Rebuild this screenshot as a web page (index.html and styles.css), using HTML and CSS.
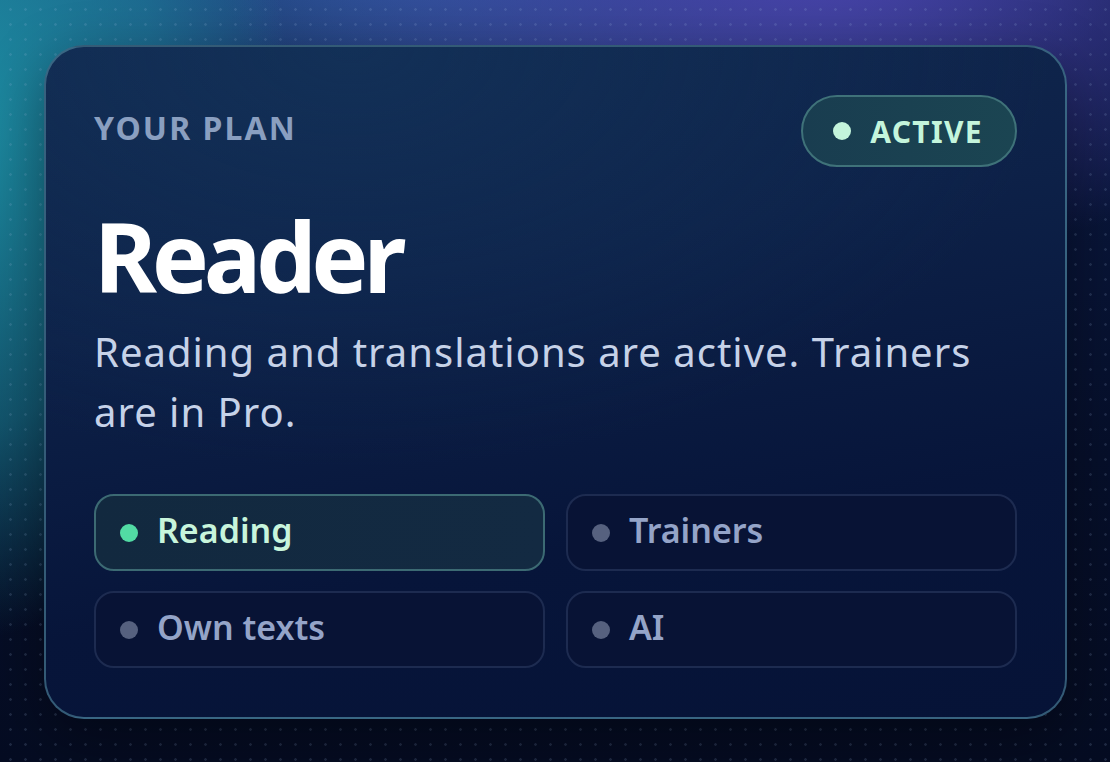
FILE: index.html
```html
<!DOCTYPE html>
<html lang="en">
<head>
<meta charset="utf-8">
<title>Your plan</title>
<link rel="stylesheet" href="styles.css">
</head>
<body>
<div class="page">
  <section class="card">
    <div class="card-head">
      <span class="eyebrow">YOUR PLAN</span>
      <span class="pill"><span class="pill-dot"></span>ACTIVE</span>
    </div>
    <h1 class="title">Reader</h1>
    <p class="desc">Reading and translations are active. Trainers are in Pro.</p>
    <div class="features">
      <div class="chip chip-on"><span class="dot"></span>Reading</div>
      <div class="chip"><span class="dot"></span>Trainers</div>
      <div class="chip"><span class="dot"></span>Own texts</div>
      <div class="chip"><span class="dot"></span>AI</div>
    </div>
  </section>
</div>
</body>
</html>
```

FILE: styles.css
```css
* { box-sizing: border-box; }
html, body { margin: 0; padding: 0; }
body {
  width: 1110px;
  height: 762px;
  overflow: hidden;
  font-family: "Noto Sans", "Open Sans", sans-serif;
  background-color: #050c22;
  background-image:
    radial-gradient(circle at 50% 50%, rgba(160, 190, 230, 0.16) 0 1px, transparent 1.6px),
    radial-gradient(ellipse 330px 520px at -40px 120px, rgba(30, 150, 170, 0.95), rgba(30, 150, 170, 0.5) 60%, rgba(30, 150, 170, 0) 100%),
    radial-gradient(ellipse 600px 300px at 820px -40px, rgba(80, 70, 180, 0.9), rgba(80, 70, 180, 0) 100%),
    radial-gradient(ellipse 700px 260px at 420px -40px, rgba(45, 95, 160, 0.95), rgba(45, 95, 160, 0) 100%),
    linear-gradient(180deg, #0b1a44 0%, #060f2a 60%, #050c22 100%);
  background-size: 15px 15px, auto, auto, auto, auto;
  background-position: 3px 2px, 0 0, 0 0, 0 0, 0 0;
}
.page {
  padding: 45px 0 0 44px;
}
.card {
  width: 1023px;
  height: 674px;
  border: 2px solid rgba(90, 150, 170, 0.55);
  border-radius: 40px;
  padding: 48px;
  background:
    radial-gradient(ellipse 700px 420px at 30% 0%, rgba(20, 55, 95, 0.55), rgba(20, 55, 95, 0) 100%),
    linear-gradient(170deg, #11294f 0%, #0d2148 35%, #07153a 70%, #061337 100%);
  box-shadow: 0 20px 60px rgba(0, 0, 0, 0.35);
}
.card-head {
  display: flex;
  justify-content: space-between;
  align-items: center;
  height: 72px;
}
.eyebrow {
  font-size: 32px;
  font-weight: 700;
  letter-spacing: 0.065em;
  color: #8a9fc0;
  margin-top: -8px;
}
.pill {
  display: flex;
  align-items: center;
  gap: 19px;
  height: 72px;
  padding: 0 32px 0 30px;
  border: 2px solid #3f7279;
  border-radius: 36px;
  background: linear-gradient(90deg, #193d50, #1b4552);
  color: #c4f5dc;
  font-size: 30px;
  font-weight: 700;
  letter-spacing: 0.045em;
}
.pill-dot {
  width: 18px;
  height: 18px;
  border-radius: 50%;
  background: #c4f5dc;
}
.title {
  margin: 41px 0 0;
  font-size: 96px;
  line-height: 1;
  font-weight: 700;
  color: #ffffff;
  letter-spacing: -0.055em;
}
.desc {
  margin: 18px 0 0;
  font-size: 40px;
  line-height: 60px;
  color: #c6d2e8;
  letter-spacing: 0.025em;
}
.features {
  margin-top: 52px;
  display: grid;
  grid-template-columns: 1fr 1fr;
  column-gap: 21px;
  row-gap: 20px;
}
.chip {
  display: flex;
  align-items: center;
  gap: 19px;
  height: 77px;
  padding: 0 24px 5px;
  border: 2px solid #1d2b50;
  border-radius: 20px;
  background: #081335;
  color: #94a4c8;
  font-size: 34px;
  font-weight: 650;
}
.chip .dot {
  width: 18px;
  height: 18px;
  border-radius: 50%;
  background: #56617f;
  margin-top: 5px;
}
.chip-on {
  border-color: #3c6a73;
  background: linear-gradient(90deg, #12293f, #132a42);
  color: #c8f5dc;
}
.chip-on .dot {
  background: #52dba4;
}
```
